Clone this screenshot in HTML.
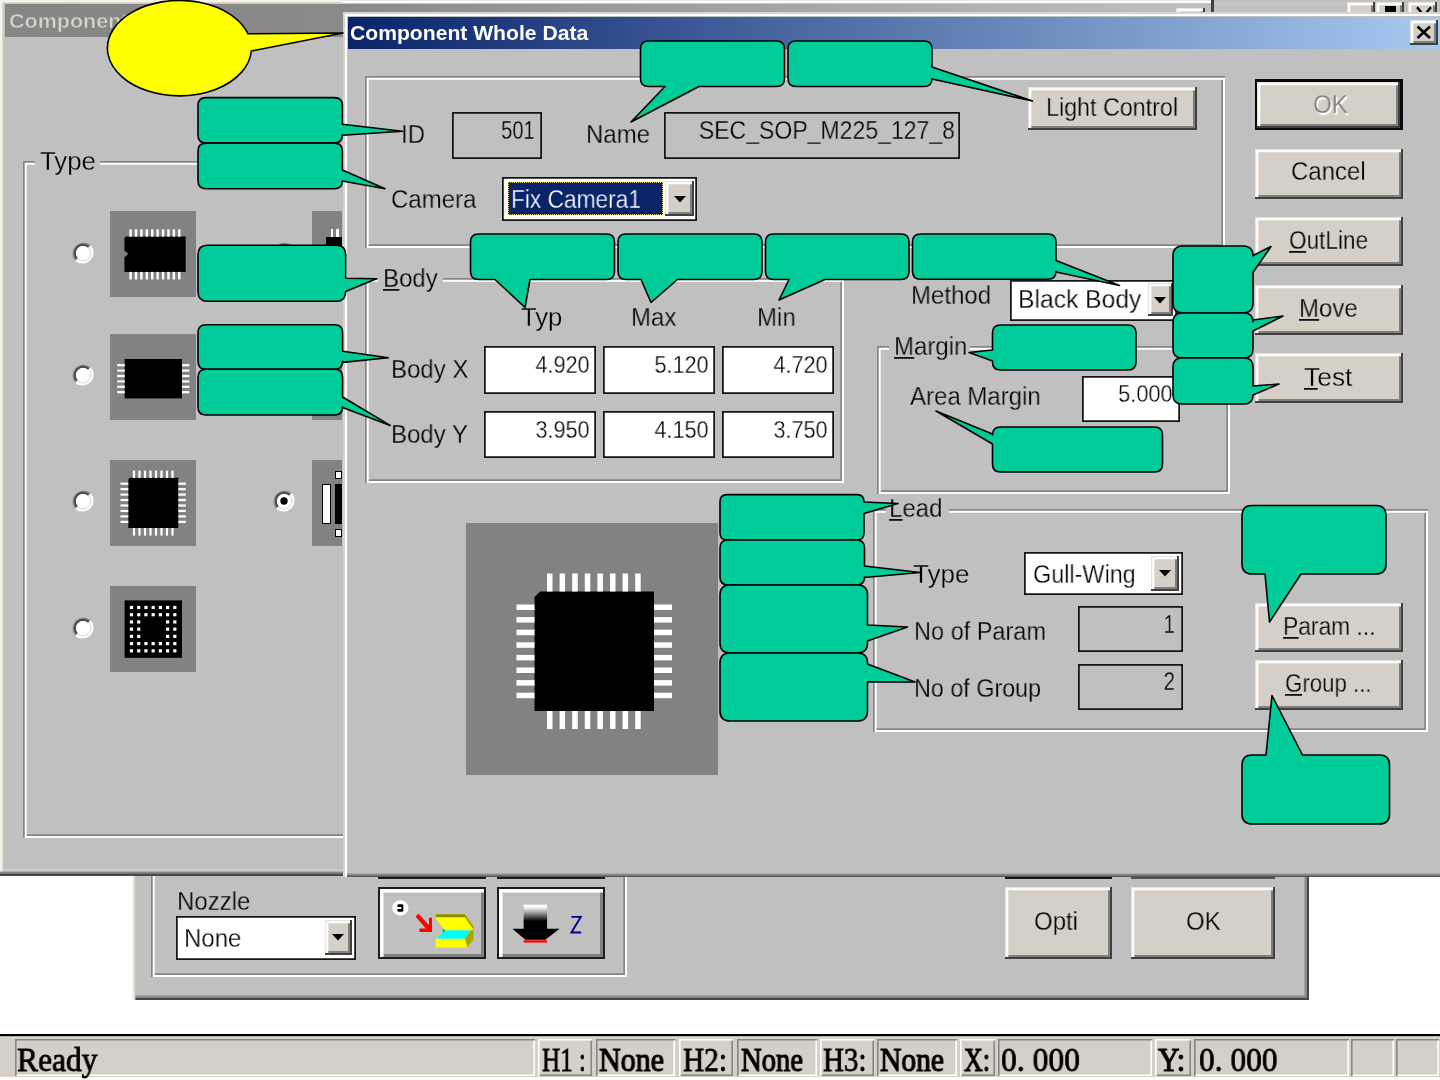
<!DOCTYPE html>
<html><head><meta charset="utf-8"><title>Component Whole Data</title>
<style>
*{box-sizing:border-box;margin:0;padding:0}
html,body{width:1440px;height:1080px;overflow:hidden;background:#fff}
body{font-family:"Liberation Sans",sans-serif;font-size:24px;color:#000;position:relative}
.a{position:absolute}
.t{white-space:nowrap;will-change:transform}
.t u{text-decoration:none;background:linear-gradient(#111,#111) no-repeat 0 24.5px/100% 1.8px}
.gb{box-shadow:inset 1.7px 1.7px 0 #858585,inset -2px -2px 0 #fff,inset 3.7px 3.7px 0 #fff,inset -3.7px -3.7px 0 #858585}
.btn{background:#d4d0c8;box-shadow:inset -2px -2px 0 #404040,inset 1.3px 1.3px 0 #e6e4de,inset 3.3px 3.3px 0 #fff,inset -4px -4px 0 #808080}
.flat{box-shadow:inset 0 0 0 1.75px #151515}
.inp{box-shadow:inset 0 0 0 1.75px #151515;background:#fff}
.sunk{background:#fff;box-shadow:inset 2px 2px 0 #808080,inset -2px -2px 0 #fff,inset 4px 4px 0 #404040,inset -4px -4px 0 #d4d0c8}
.lab{background:#c0c0c0}
.serif{font-family:"Liberation Serif",serif;font-weight:bold}
.pane{box-shadow:inset 1.6px 1.6px 0 #868686,inset -1.6px -1.6px 0 #fff}
.paner{box-shadow:inset 1.6px 1.6px 0 #fff,inset -1.6px -1.6px 0 #868686}
</style></head>
<body>
<div class="a " style="left:131.5px;top:860px;width:1177.5px;height:139.5px;background:#c0c0c0;box-shadow:inset 2px 0 0 #f4f2ea,inset 3.4px 0 0 #d8d4cc,inset -2px -2px 0 #484848,inset -4.5px -4.5px 0 #8a8a8a"></div>
<div class="a gb" style="left:150.8px;top:860px;width:476.2px;height:116.7px;"></div>
<div class="a t " style="top:888.94px;font-size:25px;line-height:25px;left:177px;transform:scaleX(0.96);transform-origin:left center;-webkit-text-stroke:0.3px #c0c0c0;">Nozzle</div>
<div class="a " style="left:378px;top:876px;width:107.5px;height:3.4px;background:#1c1c1c"></div>
<div class="a " style="left:497px;top:876px;width:107.5px;height:3.4px;background:#1c1c1c"></div>
<div class="a " style="left:1005px;top:876px;width:107px;height:3.4px;background:#141414"></div>
<div class="a " style="left:1131px;top:876px;width:143.5px;height:3.4px;background:#505050"></div>
<div class="a inp" style="left:175.5px;top:915.5px;width:180.5px;height:44.0px;"></div>
<div class="a t " style="top:925.94px;font-size:25px;line-height:25px;left:184px;transform:scaleX(0.96);transform-origin:left center;-webkit-text-stroke:0.3px #fff;">None</div>
<div class="a btn" style="left:324.5px;top:920px;width:27.5px;height:34.5px;"></div>
<svg class="a" style="left:332px;top:934px" width="12" height="7"><path d="M0 0h12L6 6.5z" fill="#000"/></svg>
<div class="a " style="left:378px;top:887px;width:107.5px;height:71.8px;background:#c0c0c0;border:2px solid #1c1c1c;box-shadow:inset 3.5px 3.5px 0 #fff,inset -3px -3px 0 #808080"></div>
<div class="a " style="left:497px;top:887px;width:107.5px;height:71.8px;background:#c0c0c0;border:2px solid #1c1c1c;box-shadow:inset 3.5px 3.5px 0 #fff,inset -3px -3px 0 #808080"></div>
<div class="a btn" style="left:1004.6px;top:887.2px;width:107.4px;height:71.6px;"></div>
<div class="a t " style="top:909.44px;font-size:25px;line-height:25px;left:1034px;transform:scaleX(0.96);transform-origin:left center;-webkit-text-stroke:0.3px #d4d0c8;">Opti</div>
<div class="a btn" style="left:1130.6px;top:887.2px;width:144.0px;height:71.6px;"></div>
<div class="a t " style="top:909.44px;font-size:25px;line-height:25px;left:1186px;transform:scaleX(0.96);transform-origin:left center;-webkit-text-stroke:0.3px #d4d0c8;">OK</div>
<div class="a " style="left:0px;top:0px;width:1440px;height:875.8px;background:#c0c0c0;box-shadow:inset 0 -2.2px 0 #484848,inset 0 -4.5px 0 #868686,inset 2.3px 2.3px 0 #f4f2ea,inset 3.5px 3.5px 0 #d4d0c8,inset 0 -6.5px 0 #d4d0c8"></div>
<div class="a " style="left:5px;top:4px;width:1206px;height:32.5px;background:linear-gradient(90deg,#868686 0,#8a8a8a 340px,#c0c0c0 1206px)"></div>
<div class="a " style="left:343px;top:0px;width:868px;height:2.6px;background:linear-gradient(#e6e6e6 0,#e6e6e6 40%,#fff 45%)"></div>
<div class="a " style="left:343px;top:2.6px;width:868px;height:1.8px;background:#c4c4c4"></div>
<div class="a t " style="top:10.97px;font-size:20px;line-height:20px;left:8.7px;transform:scaleX(1.075);transform-origin:left center;-webkit-text-stroke:0.5px #8a8a8a;font-weight:bold;color:#d8d4cc">Component</div>
<div class="a " style="left:1213.5px;top:0px;width:226.5px;height:3px;background:#c0c0c0"></div>
<div class="a " style="left:1211px;top:0px;width:2.5px;height:12px;background:#404040"></div>
<div class="a btn" style="left:1175.8px;top:7.5px;width:29.2px;height:14.5px;"></div>
<div class="a btn" style="left:1346.7px;top:2px;width:28.3px;height:28px;"></div>
<div class="a btn" style="left:1376px;top:2px;width:28.2px;height:28px;"></div>
<div class="a btn" style="left:1408px;top:2px;width:28.7px;height:28px;"></div>
<div class="a " style="left:1384.8px;top:5.7px;width:11.0px;height:6.8px;background:#000"></div>
<svg class="a" style="left:1410px;top:0" width="26" height="13"><path d="M7 7.2L11.5 12.5M21 7.2L16.5 12.5" stroke="#000" stroke-width="2.4" fill="none"/></svg>
<div class="a gb" style="left:22.8px;top:160.7px;width:397.2px;height:677.3px;"></div>
<div class="a lab" style="left:35.4px;top:150px;width:65.0px;height:26px;"></div>
<div class="a t " style="top:149.14px;font-size:25px;line-height:25px;left:39.5px;transform:scaleX(1.032);transform-origin:left center;-webkit-text-stroke:0.3px #c0c0c0;">Type</div>
<svg class="a" style="left:70.5px;top:240.5px" width="24" height="24"><circle cx="12" cy="12" r="8.2" fill="#fff"/><path d="M5.3 18.7A9.5 9.5 0 0 1 18.7 5.3" fill="none" stroke="#8a8a8a" stroke-width="3.2"/><path d="M6.2 17.8A8.2 8.2 0 0 1 17.8 6.2" fill="none" stroke="#484848" stroke-width="1.9"/><path d="M18.7 5.3A9.5 9.5 0 0 1 5.3 18.7" fill="none" stroke="#fff" stroke-width="3.2"/><path d="M17.6 6.4A7.9 7.9 0 0 1 6.4 17.6" fill="none" stroke="#e2ded6" stroke-width="1.2"/></svg>
<svg class="a" style="left:70.5px;top:363px" width="24" height="24"><circle cx="12" cy="12" r="8.2" fill="#fff"/><path d="M5.3 18.7A9.5 9.5 0 0 1 18.7 5.3" fill="none" stroke="#8a8a8a" stroke-width="3.2"/><path d="M6.2 17.8A8.2 8.2 0 0 1 17.8 6.2" fill="none" stroke="#484848" stroke-width="1.9"/><path d="M18.7 5.3A9.5 9.5 0 0 1 5.3 18.7" fill="none" stroke="#fff" stroke-width="3.2"/><path d="M17.6 6.4A7.9 7.9 0 0 1 6.4 17.6" fill="none" stroke="#e2ded6" stroke-width="1.2"/></svg>
<svg class="a" style="left:70.5px;top:489px" width="24" height="24"><circle cx="12" cy="12" r="8.2" fill="#fff"/><path d="M5.3 18.7A9.5 9.5 0 0 1 18.7 5.3" fill="none" stroke="#8a8a8a" stroke-width="3.2"/><path d="M6.2 17.8A8.2 8.2 0 0 1 17.8 6.2" fill="none" stroke="#484848" stroke-width="1.9"/><path d="M18.7 5.3A9.5 9.5 0 0 1 5.3 18.7" fill="none" stroke="#fff" stroke-width="3.2"/><path d="M17.6 6.4A7.9 7.9 0 0 1 6.4 17.6" fill="none" stroke="#e2ded6" stroke-width="1.2"/></svg>
<svg class="a" style="left:70.5px;top:615.5px" width="24" height="24"><circle cx="12" cy="12" r="8.2" fill="#fff"/><path d="M5.3 18.7A9.5 9.5 0 0 1 18.7 5.3" fill="none" stroke="#8a8a8a" stroke-width="3.2"/><path d="M6.2 17.8A8.2 8.2 0 0 1 17.8 6.2" fill="none" stroke="#484848" stroke-width="1.9"/><path d="M18.7 5.3A9.5 9.5 0 0 1 5.3 18.7" fill="none" stroke="#fff" stroke-width="3.2"/><path d="M17.6 6.4A7.9 7.9 0 0 1 6.4 17.6" fill="none" stroke="#e2ded6" stroke-width="1.2"/></svg>
<svg class="a" style="left:272.2px;top:240.5px" width="24" height="24"><circle cx="12" cy="12" r="8.2" fill="#fff"/><path d="M5.3 18.7A9.5 9.5 0 0 1 18.7 5.3" fill="none" stroke="#8a8a8a" stroke-width="3.2"/><path d="M6.2 17.8A8.2 8.2 0 0 1 17.8 6.2" fill="none" stroke="#484848" stroke-width="1.9"/><path d="M18.7 5.3A9.5 9.5 0 0 1 5.3 18.7" fill="none" stroke="#fff" stroke-width="3.2"/><path d="M17.6 6.4A7.9 7.9 0 0 1 6.4 17.6" fill="none" stroke="#e2ded6" stroke-width="1.2"/></svg>
<svg class="a" style="left:272.2px;top:363px" width="24" height="24"><circle cx="12" cy="12" r="8.2" fill="#fff"/><path d="M5.3 18.7A9.5 9.5 0 0 1 18.7 5.3" fill="none" stroke="#8a8a8a" stroke-width="3.2"/><path d="M6.2 17.8A8.2 8.2 0 0 1 17.8 6.2" fill="none" stroke="#484848" stroke-width="1.9"/><path d="M18.7 5.3A9.5 9.5 0 0 1 5.3 18.7" fill="none" stroke="#fff" stroke-width="3.2"/><path d="M17.6 6.4A7.9 7.9 0 0 1 6.4 17.6" fill="none" stroke="#e2ded6" stroke-width="1.2"/></svg>
<svg class="a" style="left:272.2px;top:489px" width="24" height="24"><circle cx="12" cy="12" r="8.2" fill="#fff"/><path d="M5.3 18.7A9.5 9.5 0 0 1 18.7 5.3" fill="none" stroke="#8a8a8a" stroke-width="3.2"/><path d="M6.2 17.8A8.2 8.2 0 0 1 17.8 6.2" fill="none" stroke="#484848" stroke-width="1.9"/><path d="M18.7 5.3A9.5 9.5 0 0 1 5.3 18.7" fill="none" stroke="#fff" stroke-width="3.2"/><path d="M17.6 6.4A7.9 7.9 0 0 1 6.4 17.6" fill="none" stroke="#e2ded6" stroke-width="1.2"/><circle cx="12" cy="12" r="3.7" fill="#000"/></svg>
<svg class="a" style="left:109.5px;top:211px" width="86.5" height="86.2" viewBox="0 0 86.5 86.2">
<rect width="86.5" height="86.2" fill="#828282"/>
<path d="M16 25.5H75.7V60.9H14.4V46.3L18.5 42.9L14.4 39.4V27Z" fill="#000"/>
<rect x="19.40" y="18.3" width="2.4" height="7.4" fill="#fff"/><rect x="19.40" y="60.9" width="2.4" height="7.6" fill="#fff"/>
<rect x="24.81" y="18.3" width="2.4" height="7.4" fill="#fff"/><rect x="24.81" y="60.9" width="2.4" height="7.6" fill="#fff"/>
<rect x="30.22" y="18.3" width="2.4" height="7.4" fill="#fff"/><rect x="30.22" y="60.9" width="2.4" height="7.6" fill="#fff"/>
<rect x="35.63" y="18.3" width="2.4" height="7.4" fill="#fff"/><rect x="35.63" y="60.9" width="2.4" height="7.6" fill="#fff"/>
<rect x="41.04" y="18.3" width="2.4" height="7.4" fill="#fff"/><rect x="41.04" y="60.9" width="2.4" height="7.6" fill="#fff"/>
<rect x="46.45" y="18.3" width="2.4" height="7.4" fill="#fff"/><rect x="46.45" y="60.9" width="2.4" height="7.6" fill="#fff"/>
<rect x="51.86" y="18.3" width="2.4" height="7.4" fill="#fff"/><rect x="51.86" y="60.9" width="2.4" height="7.6" fill="#fff"/>
<rect x="57.27" y="18.3" width="2.4" height="7.4" fill="#fff"/><rect x="57.27" y="60.9" width="2.4" height="7.6" fill="#fff"/>
<rect x="62.68" y="18.3" width="2.4" height="7.4" fill="#fff"/><rect x="62.68" y="60.9" width="2.4" height="7.6" fill="#fff"/>
<rect x="68.09" y="18.3" width="2.4" height="7.4" fill="#fff"/><rect x="68.09" y="60.9" width="2.4" height="7.6" fill="#fff"/>
</svg>
<svg class="a" style="left:109.5px;top:334px" width="86.5" height="86" viewBox="0 0 86.5 86">
<rect width="86.5" height="86" fill="#828282"/>
<rect x="14.6" y="25" width="57.4" height="39.4" fill="#000"/>
<rect x="7.2" y="30.10" width="7.6" height="2.2" fill="#fff"/><rect x="72" y="30.10" width="7.4" height="2.2" fill="#fff"/>
<rect x="7.2" y="35.50" width="7.6" height="2.2" fill="#fff"/><rect x="72" y="35.50" width="7.4" height="2.2" fill="#fff"/>
<rect x="7.2" y="40.90" width="7.6" height="2.2" fill="#fff"/><rect x="72" y="40.90" width="7.4" height="2.2" fill="#fff"/>
<rect x="7.2" y="46.30" width="7.6" height="2.2" fill="#fff"/><rect x="72" y="46.30" width="7.4" height="2.2" fill="#fff"/>
<rect x="7.2" y="51.70" width="7.6" height="2.2" fill="#fff"/><rect x="72" y="51.70" width="7.4" height="2.2" fill="#fff"/>
<rect x="7.2" y="57.10" width="7.6" height="2.2" fill="#fff"/><rect x="72" y="57.10" width="7.4" height="2.2" fill="#fff"/>
</svg>
<svg class="a" style="left:109.5px;top:460px" width="86.5" height="86" viewBox="0 0 86.5 86">
<rect width="86.5" height="86" fill="#828282"/>
<path d="M20 17.8H68.3V68H18.3V19.5Z" fill="#000"/>
<rect x="22.90" y="10.6" width="2.2" height="7.4" fill="#fff"/><rect x="22.90" y="68" width="2.2" height="7.6" fill="#fff"/>
<rect x="10.5" y="22.60" width="7.8" height="2.2" fill="#fff"/><rect x="68.3" y="22.60" width="7.5" height="2.2" fill="#fff"/>
<rect x="28.40" y="10.6" width="2.2" height="7.4" fill="#fff"/><rect x="28.40" y="68" width="2.2" height="7.6" fill="#fff"/>
<rect x="10.5" y="28.05" width="7.8" height="2.2" fill="#fff"/><rect x="68.3" y="28.05" width="7.5" height="2.2" fill="#fff"/>
<rect x="33.90" y="10.6" width="2.2" height="7.4" fill="#fff"/><rect x="33.90" y="68" width="2.2" height="7.6" fill="#fff"/>
<rect x="10.5" y="33.50" width="7.8" height="2.2" fill="#fff"/><rect x="68.3" y="33.50" width="7.5" height="2.2" fill="#fff"/>
<rect x="39.40" y="10.6" width="2.2" height="7.4" fill="#fff"/><rect x="39.40" y="68" width="2.2" height="7.6" fill="#fff"/>
<rect x="10.5" y="38.95" width="7.8" height="2.2" fill="#fff"/><rect x="68.3" y="38.95" width="7.5" height="2.2" fill="#fff"/>
<rect x="44.90" y="10.6" width="2.2" height="7.4" fill="#fff"/><rect x="44.90" y="68" width="2.2" height="7.6" fill="#fff"/>
<rect x="10.5" y="44.40" width="7.8" height="2.2" fill="#fff"/><rect x="68.3" y="44.40" width="7.5" height="2.2" fill="#fff"/>
<rect x="50.40" y="10.6" width="2.2" height="7.4" fill="#fff"/><rect x="50.40" y="68" width="2.2" height="7.6" fill="#fff"/>
<rect x="10.5" y="49.85" width="7.8" height="2.2" fill="#fff"/><rect x="68.3" y="49.85" width="7.5" height="2.2" fill="#fff"/>
<rect x="55.90" y="10.6" width="2.2" height="7.4" fill="#fff"/><rect x="55.90" y="68" width="2.2" height="7.6" fill="#fff"/>
<rect x="10.5" y="55.30" width="7.8" height="2.2" fill="#fff"/><rect x="68.3" y="55.30" width="7.5" height="2.2" fill="#fff"/>
<rect x="61.40" y="10.6" width="2.2" height="7.4" fill="#fff"/><rect x="61.40" y="68" width="2.2" height="7.6" fill="#fff"/>
<rect x="10.5" y="60.75" width="7.8" height="2.2" fill="#fff"/><rect x="68.3" y="60.75" width="7.5" height="2.2" fill="#fff"/>
</svg>
<svg class="a" style="left:109.5px;top:586px" width="86.5" height="86" viewBox="0 0 86.5 86">
<rect width="86.5" height="86" fill="#828282"/>
<rect x="14.6" y="14.4" width="57.4" height="57.4" fill="#000"/>
<rect x="19.90" y="19.90" width="3.2" height="3.2" fill="#fff"/>
<rect x="27.12" y="19.90" width="3.2" height="3.2" fill="#fff"/>
<rect x="34.34" y="19.90" width="3.2" height="3.2" fill="#fff"/>
<rect x="41.56" y="19.90" width="3.2" height="3.2" fill="#fff"/>
<rect x="48.78" y="19.90" width="3.2" height="3.2" fill="#fff"/>
<rect x="56.00" y="19.90" width="3.2" height="3.2" fill="#fff"/>
<rect x="63.22" y="19.90" width="3.2" height="3.2" fill="#fff"/>
<rect x="19.90" y="27.12" width="3.2" height="3.2" fill="#fff"/>
<rect x="27.12" y="27.12" width="3.2" height="3.2" fill="#fff"/>
<rect x="34.34" y="27.12" width="3.2" height="3.2" fill="#fff"/>
<rect x="41.56" y="27.12" width="3.2" height="3.2" fill="#fff"/>
<rect x="48.78" y="27.12" width="3.2" height="3.2" fill="#fff"/>
<rect x="56.00" y="27.12" width="3.2" height="3.2" fill="#fff"/>
<rect x="63.22" y="27.12" width="3.2" height="3.2" fill="#fff"/>
<rect x="19.90" y="34.34" width="3.2" height="3.2" fill="#fff"/>
<rect x="27.12" y="34.34" width="3.2" height="3.2" fill="#fff"/>
<rect x="56.00" y="34.34" width="3.2" height="3.2" fill="#fff"/>
<rect x="63.22" y="34.34" width="3.2" height="3.2" fill="#fff"/>
<rect x="19.90" y="41.56" width="3.2" height="3.2" fill="#fff"/>
<rect x="27.12" y="41.56" width="3.2" height="3.2" fill="#fff"/>
<rect x="56.00" y="41.56" width="3.2" height="3.2" fill="#fff"/>
<rect x="63.22" y="41.56" width="3.2" height="3.2" fill="#fff"/>
<rect x="19.90" y="48.78" width="3.2" height="3.2" fill="#fff"/>
<rect x="27.12" y="48.78" width="3.2" height="3.2" fill="#fff"/>
<rect x="56.00" y="48.78" width="3.2" height="3.2" fill="#fff"/>
<rect x="63.22" y="48.78" width="3.2" height="3.2" fill="#fff"/>
<rect x="19.90" y="56.00" width="3.2" height="3.2" fill="#fff"/>
<rect x="27.12" y="56.00" width="3.2" height="3.2" fill="#fff"/>
<rect x="34.34" y="56.00" width="3.2" height="3.2" fill="#fff"/>
<rect x="41.56" y="56.00" width="3.2" height="3.2" fill="#fff"/>
<rect x="48.78" y="56.00" width="3.2" height="3.2" fill="#fff"/>
<rect x="56.00" y="56.00" width="3.2" height="3.2" fill="#fff"/>
<rect x="63.22" y="56.00" width="3.2" height="3.2" fill="#fff"/>
<rect x="19.90" y="63.22" width="3.2" height="3.2" fill="#fff"/>
<rect x="27.12" y="63.22" width="3.2" height="3.2" fill="#fff"/>
<rect x="34.34" y="63.22" width="3.2" height="3.2" fill="#fff"/>
<rect x="41.56" y="63.22" width="3.2" height="3.2" fill="#fff"/>
<rect x="48.78" y="63.22" width="3.2" height="3.2" fill="#fff"/>
<rect x="56.00" y="63.22" width="3.2" height="3.2" fill="#fff"/>
<rect x="63.22" y="63.22" width="3.2" height="3.2" fill="#fff"/>
</svg>
<div class="a " style="left:311.5px;top:211px;width:30.5px;height:86px;background:#828282"></div>
<div class="a " style="left:311.5px;top:334px;width:30.5px;height:86px;background:#828282"></div>
<div class="a " style="left:311.5px;top:460px;width:30.5px;height:86px;background:#828282"></div>
<div class="a " style="left:326px;top:236.6px;width:16px;height:35.4px;background:#000"></div>
<div class="a " style="left:331px;top:229px;width:2.4px;height:7.6px;background:#fff"></div>
<div class="a " style="left:336.4px;top:229px;width:2.4px;height:7.6px;background:#fff"></div>
<div class="a " style="left:322px;top:484px;width:9px;height:40px;background:#fff;border:1.5px solid #000"></div>
<div class="a " style="left:334.5px;top:484px;width:7.5px;height:40px;background:#000"></div>
<div class="a " style="left:334.5px;top:471px;width:7.5px;height:8px;background:#fff;border:1.5px solid #000"></div>
<div class="a " style="left:334.5px;top:529px;width:7.5px;height:8px;background:#fff;border:1.5px solid #000"></div>
<div class="a " style="left:342.5px;top:12px;width:1101.5px;height:865px;background:#c0c0c0;box-shadow:inset 2px 2px 0 #d8d4cc,inset 4px 4px 0 #fff,inset 0 -1.5px 0 #585858,inset 0 -3.5px 0 #909090"></div>
<div class="a " style="left:347.5px;top:16.5px;width:1092.5px;height:32.0px;background:linear-gradient(90deg,#0a246a 0,#a6caf0 100%)"></div>
<div class="a t " style="top:23.47px;font-size:20px;line-height:20px;left:350.4px;transform:scaleX(1.056);transform-origin:left center;font-weight:bold;color:#fff">Component Whole Data</div>
<div class="a btn" style="left:1410px;top:20px;width:28.3px;height:25px;"></div>
<svg class="a" style="left:1416px;top:25px" width="16" height="15"><path d="M1.5 1.5L14 13M14 1.5L1.5 13" stroke="#000" stroke-width="2.6" fill="none"/></svg>
<div class="a gb" style="left:365.4px;top:76.2px;width:860.1px;height:171.8px;"></div>
<div class="a t " style="top:121.94px;font-size:25px;line-height:25px;left:401px;transform:scaleX(0.96);transform-origin:left center;-webkit-text-stroke:0.3px #c0c0c0;">ID</div>
<div class="a flat" style="left:451.5px;top:112.0px;width:90.0px;height:46.5px;"></div>
<div class="a t " style="top:118.44px;font-size:25px;line-height:25px;right:905.7px;transform:scaleX(0.8064);transform-origin:right center;-webkit-text-stroke:0.3px #c0c0c0;">501</div>
<div class="a t " style="top:121.94px;font-size:25px;line-height:25px;left:586px;transform:scaleX(0.96);transform-origin:left center;-webkit-text-stroke:0.3px #c0c0c0;">Name</div>
<div class="a flat" style="left:664.0px;top:112.0px;width:296.0px;height:46.5px;"></div>
<div class="a t " style="top:118.44px;font-size:25px;line-height:25px;right:485.5px;transform:scaleX(0.9216);transform-origin:right center;-webkit-text-stroke:0.3px #c0c0c0;">SEC_SOP_M225_127_8</div>
<div class="a t " style="top:187.44px;font-size:25px;line-height:25px;left:391px;transform:scaleX(0.96);transform-origin:left center;-webkit-text-stroke:0.3px #c0c0c0;">Camera</div>
<div class="a inp" style="left:501.5px;top:176.5px;width:195.5px;height:44.0px;"></div>
<div class="a " style="left:507.5px;top:182px;width:155.0px;height:33px;background:#0a246a;outline:1.5px dotted #d8c878;outline-offset:-1.5px"></div>
<div class="a t " style="top:187.24px;font-size:25px;line-height:25px;left:510.5px;transform:scaleX(0.9082);transform-origin:left center;-webkit-text-stroke:0.3px #0a246a;color:#fff">Fix Camera1</div>
<div class="a btn" style="left:665px;top:180.5px;width:28.5px;height:35.5px;"></div>
<svg class="a" style="left:673.5px;top:195.5px" width="12" height="7"><path d="M0 0h12L6 6.5z" fill="#000"/></svg>
<div class="a btn" style="left:1028.4px;top:87.4px;width:168.6px;height:42.3px;"></div>
<div class="a t " style="top:94.94px;font-size:25px;line-height:25px;left:1046px;transform:scaleX(0.9312);transform-origin:left center;-webkit-text-stroke:0.3px #d4d0c8;">Light Control</div>
<div class="a " style="left:1254.8999999999999px;top:79.3px;width:147.7px;height:51.0px;background:#0a0a0a"></div>
<div class="a btn" style="left:1257.3px;top:81.5px;width:143.1px;height:46.5px;"></div>
<div class="a t " style="top:91.94px;font-size:25px;line-height:25px;left:1313px;transform:scaleX(0.96);transform-origin:left center;-webkit-text-stroke:0.3px #d4d0c8;color:#808080;text-shadow:1.5px 1.5px 0 #fff;">OK</div>
<div class="a btn" style="left:1255.3px;top:148.5px;width:147.3px;height:50.0px;"></div>
<div class="a t " style="top:159.44px;font-size:25px;line-height:25px;left:1291px;transform:scaleX(0.96);transform-origin:left center;-webkit-text-stroke:0.3px #d4d0c8;">Cancel</div>
<div class="a btn" style="left:1255.3px;top:216.5px;width:147.3px;height:49.5px;"></div>
<div class="a t " style="top:228.44px;font-size:25px;line-height:25px;left:1288.5px;transform:scaleX(0.9024);transform-origin:left center;-webkit-text-stroke:0.3px #d4d0c8;"><u>O</u>utLine</div>
<div class="a btn" style="left:1255.3px;top:285px;width:147.3px;height:50px;"></div>
<div class="a t " style="top:296.44px;font-size:25px;line-height:25px;left:1299px;transform:scaleX(0.96);transform-origin:left center;-webkit-text-stroke:0.3px #d4d0c8;"><u>M</u>ove</div>
<div class="a btn" style="left:1255.3px;top:353px;width:147.3px;height:50px;"></div>
<div class="a t " style="top:364.94px;font-size:25px;line-height:25px;left:1304px;transform:scaleX(1.056);transform-origin:left center;-webkit-text-stroke:0.3px #d4d0c8;"><u>T</u>est</div>
<div class="a btn" style="left:1255.3px;top:603.2px;width:147.3px;height:48.8px;"></div>
<div class="a t " style="top:614.44px;font-size:25px;line-height:25px;left:1282.5px;transform:scaleX(0.912);transform-origin:left center;-webkit-text-stroke:0.3px #d4d0c8;"><u>P</u>aram ...</div>
<div class="a btn" style="left:1255.3px;top:660px;width:147.3px;height:50px;"></div>
<div class="a t " style="top:671.44px;font-size:25px;line-height:25px;left:1284.5px;transform:scaleX(0.8899);transform-origin:left center;-webkit-text-stroke:0.3px #d4d0c8;"><u>G</u>roup ...</div>
<div class="a gb" style="left:365.4px;top:278px;width:478.8px;height:205.2px;"></div>
<div class="a lab" style="left:377.5px;top:266px;width:65.0px;height:26px;"></div>
<div class="a t " style="top:265.74px;font-size:25px;line-height:25px;left:382.5px;transform:scaleX(0.96);transform-origin:left center;-webkit-text-stroke:0.3px #c0c0c0;"><u>B</u>ody</div>
<div class="a t " style="top:305.44px;font-size:25px;line-height:25px;left:521px;transform:scaleX(1.0272);transform-origin:left center;-webkit-text-stroke:0.3px #c0c0c0;">Typ</div>
<div class="a t " style="top:305.44px;font-size:25px;line-height:25px;left:631px;transform:scaleX(0.96);transform-origin:left center;-webkit-text-stroke:0.3px #c0c0c0;">Max</div>
<div class="a t " style="top:305.44px;font-size:25px;line-height:25px;left:757px;transform:scaleX(0.96);transform-origin:left center;-webkit-text-stroke:0.3px #c0c0c0;">Min</div>
<div class="a t " style="top:356.64px;font-size:25px;line-height:25px;left:391px;transform:scaleX(0.96);transform-origin:left center;-webkit-text-stroke:0.3px #c0c0c0;">Body X</div>
<div class="a t " style="top:421.74px;font-size:25px;line-height:25px;left:391px;transform:scaleX(0.96);transform-origin:left center;-webkit-text-stroke:0.3px #c0c0c0;">Body Y</div>
<div class="a inp" style="left:483.5px;top:345.5px;width:112.5px;height:48.0px;"></div>
<div class="a t " style="top:354.43px;font-size:23px;line-height:23px;right:850.0px;transform:scaleX(0.94);transform-origin:right center;-webkit-text-stroke:0.3px #fff;">4.920</div>
<div class="a inp" style="left:602.5px;top:345.5px;width:112.5px;height:48.0px;"></div>
<div class="a t " style="top:354.43px;font-size:23px;line-height:23px;right:731.0px;transform:scaleX(0.94);transform-origin:right center;-webkit-text-stroke:0.3px #fff;">5.120</div>
<div class="a inp" style="left:721.5px;top:345.5px;width:112.0px;height:48.0px;"></div>
<div class="a t " style="top:354.43px;font-size:23px;line-height:23px;right:612.5px;transform:scaleX(0.94);transform-origin:right center;-webkit-text-stroke:0.3px #fff;">4.720</div>
<div class="a inp" style="left:483.5px;top:410.5px;width:112.5px;height:47.5px;"></div>
<div class="a t " style="top:419.43px;font-size:23px;line-height:23px;right:850.0px;transform:scaleX(0.94);transform-origin:right center;-webkit-text-stroke:0.3px #fff;">3.950</div>
<div class="a inp" style="left:602.5px;top:410.5px;width:112.5px;height:47.5px;"></div>
<div class="a t " style="top:419.43px;font-size:23px;line-height:23px;right:731.0px;transform:scaleX(0.94);transform-origin:right center;-webkit-text-stroke:0.3px #fff;">4.150</div>
<div class="a inp" style="left:721.5px;top:410.5px;width:112.0px;height:47.5px;"></div>
<div class="a t " style="top:419.43px;font-size:23px;line-height:23px;right:612.5px;transform:scaleX(0.94);transform-origin:right center;-webkit-text-stroke:0.3px #fff;">3.750</div>
<div class="a t " style="top:283.44px;font-size:25px;line-height:25px;left:910.5px;transform:scaleX(0.96);transform-origin:left center;-webkit-text-stroke:0.3px #c0c0c0;">Method</div>
<div class="a inp" style="left:1010.0px;top:279.5px;width:166.5px;height:41.0px;"></div>
<div class="a t " style="top:286.94px;font-size:25px;line-height:25px;left:1017.5px;transform:scaleX(0.9859);transform-origin:left center;-webkit-text-stroke:0.3px #fff;">Black Body</div>
<div class="a btn" style="left:1147.5px;top:283px;width:25.0px;height:33px;"></div>
<svg class="a" style="left:1154px;top:296.5px" width="12" height="7"><path d="M0 0h12L6 6.5z" fill="#000"/></svg>
<div class="a gb" style="left:876.7px;top:346.3px;width:353.3px;height:147.7px;"></div>
<div class="a lab" style="left:889px;top:336px;width:81px;height:26px;"></div>
<div class="a t " style="top:334.44px;font-size:25px;line-height:25px;left:894px;transform:scaleX(0.96);transform-origin:left center;-webkit-text-stroke:0.3px #c0c0c0;"><u>M</u>argin</div>
<div class="a t " style="top:384.44px;font-size:25px;line-height:25px;left:909.5px;transform:scaleX(0.96);transform-origin:left center;-webkit-text-stroke:0.3px #c0c0c0;">Area Margin</div>
<div class="a inp" style="left:1082.0px;top:375.5px;width:97.5px;height:46.0px;"></div>
<div class="a t " style="top:382.93px;font-size:23px;line-height:23px;right:267.5px;transform:scaleX(0.945);transform-origin:right center;-webkit-text-stroke:0.3px #fff;">5.000</div>
<svg class="a" style="left:466px;top:522.5px" width="252" height="252.5" viewBox="0 0 252 252.5">
<rect width="252" height="252.5" fill="#828282"/>
<path d="M74 68.5H188V188H68.5V74Z" fill="#000"/>
<rect x="81.00" y="50.5" width="5.5" height="18" fill="#fff"/><rect x="81.00" y="188" width="5.5" height="18" fill="#fff"/>
<rect x="50.5" y="81.50" width="18" height="5.5" fill="#fff"/><rect x="188" y="81.50" width="18" height="5.5" fill="#fff"/>
<rect x="93.60" y="50.5" width="5.5" height="18" fill="#fff"/><rect x="93.60" y="188" width="5.5" height="18" fill="#fff"/>
<rect x="50.5" y="94.10" width="18" height="5.5" fill="#fff"/><rect x="188" y="94.10" width="18" height="5.5" fill="#fff"/>
<rect x="106.20" y="50.5" width="5.5" height="18" fill="#fff"/><rect x="106.20" y="188" width="5.5" height="18" fill="#fff"/>
<rect x="50.5" y="106.70" width="18" height="5.5" fill="#fff"/><rect x="188" y="106.70" width="18" height="5.5" fill="#fff"/>
<rect x="118.80" y="50.5" width="5.5" height="18" fill="#fff"/><rect x="118.80" y="188" width="5.5" height="18" fill="#fff"/>
<rect x="50.5" y="119.30" width="18" height="5.5" fill="#fff"/><rect x="188" y="119.30" width="18" height="5.5" fill="#fff"/>
<rect x="131.40" y="50.5" width="5.5" height="18" fill="#fff"/><rect x="131.40" y="188" width="5.5" height="18" fill="#fff"/>
<rect x="50.5" y="131.90" width="18" height="5.5" fill="#fff"/><rect x="188" y="131.90" width="18" height="5.5" fill="#fff"/>
<rect x="144.00" y="50.5" width="5.5" height="18" fill="#fff"/><rect x="144.00" y="188" width="5.5" height="18" fill="#fff"/>
<rect x="50.5" y="144.50" width="18" height="5.5" fill="#fff"/><rect x="188" y="144.50" width="18" height="5.5" fill="#fff"/>
<rect x="156.60" y="50.5" width="5.5" height="18" fill="#fff"/><rect x="156.60" y="188" width="5.5" height="18" fill="#fff"/>
<rect x="50.5" y="157.10" width="18" height="5.5" fill="#fff"/><rect x="188" y="157.10" width="18" height="5.5" fill="#fff"/>
<rect x="169.20" y="50.5" width="5.5" height="18" fill="#fff"/><rect x="169.20" y="188" width="5.5" height="18" fill="#fff"/>
<rect x="50.5" y="169.70" width="18" height="5.5" fill="#fff"/><rect x="188" y="169.70" width="18" height="5.5" fill="#fff"/>
</svg>
<div class="a gb" style="left:873.3px;top:509.2px;width:554.7px;height:222.8px;"></div>
<div class="a lab" style="left:886px;top:498px;width:63px;height:26px;"></div>
<div class="a t " style="top:496.44px;font-size:25px;line-height:25px;left:889.3px;transform:scaleX(0.96);transform-origin:left center;-webkit-text-stroke:0.3px #c0c0c0;"><u>L</u>ead</div>
<div class="a t " style="top:561.64px;font-size:25px;line-height:25px;left:912.5px;transform:scaleX(1.0416);transform-origin:left center;-webkit-text-stroke:0.3px #c0c0c0;">Type</div>
<div class="a inp" style="left:1024.0px;top:551.5px;width:159.0px;height:43.5px;"></div>
<div class="a t " style="top:562.04px;font-size:25px;line-height:25px;left:1032.5px;transform:scaleX(0.936);transform-origin:left center;-webkit-text-stroke:0.3px #fff;">Gull-Wing</div>
<div class="a btn" style="left:1151px;top:555.6px;width:28px;height:35.4px;"></div>
<svg class="a" style="left:1159px;top:570px" width="12" height="7"><path d="M0 0h12L6 6.5z" fill="#000"/></svg>
<div class="a t " style="top:618.94px;font-size:25px;line-height:25px;left:914px;transform:scaleX(0.9408);transform-origin:left center;-webkit-text-stroke:0.3px #c0c0c0;">No of Param</div>
<div class="a flat" style="left:1077.5px;top:605.5px;width:105.5px;height:46.0px;"></div>
<div class="a t " style="top:611.94px;font-size:25px;line-height:25px;right:265px;transform:scaleX(0.816);transform-origin:right center;-webkit-text-stroke:0.3px #c0c0c0;">1</div>
<div class="a t " style="top:676.44px;font-size:25px;line-height:25px;left:914px;transform:scaleX(0.9331);transform-origin:left center;-webkit-text-stroke:0.3px #c0c0c0;">No of Group</div>
<div class="a flat" style="left:1077.5px;top:663.5px;width:105.5px;height:46.5px;"></div>
<div class="a t " style="top:668.94px;font-size:25px;line-height:25px;right:265px;transform:scaleX(0.816);transform-origin:right center;-webkit-text-stroke:0.3px #c0c0c0;">2</div>
<div class="a " style="left:0px;top:1034px;width:1440px;height:42.8px;background:#d4d0c8;box-shadow:inset 0 2.2px 0 #000,inset 0 3.6px 0 #ece9e2"></div>
<div class="a pane" style="left:14.5px;top:1038.5px;width:520.5px;height:37.2px;"></div>
<div class="a paner" style="left:538px;top:1038.5px;width:54px;height:37.2px;"></div>
<div class="a pane" style="left:595.7px;top:1038.5px;width:79.8px;height:37.2px;"></div>
<div class="a paner" style="left:678.7px;top:1038.5px;width:54.3px;height:37.2px;"></div>
<div class="a pane" style="left:736.5px;top:1038.5px;width:80.0px;height:37.2px;"></div>
<div class="a paner" style="left:819.5px;top:1038.5px;width:54.5px;height:37.2px;"></div>
<div class="a pane" style="left:877px;top:1038.5px;width:80px;height:37.2px;"></div>
<div class="a paner" style="left:960px;top:1038.5px;width:34.5px;height:37.2px;"></div>
<div class="a pane" style="left:997.5px;top:1038.5px;width:154.5px;height:37.2px;"></div>
<div class="a paner" style="left:1154.5px;top:1038.5px;width:36.5px;height:37.2px;"></div>
<div class="a pane" style="left:1194px;top:1038.5px;width:154.5px;height:37.2px;"></div>
<div class="a pane" style="left:1351px;top:1038.5px;width:42.5px;height:37.2px;"></div>
<div class="a pane" style="left:1396px;top:1038.5px;width:43px;height:37.2px;"></div>
<div class="a t serif" style="left:17px;top:1043.02px;font-size:34px;line-height:34px;font-weight:normal;-webkit-text-stroke:0.8px #000;transform:scaleX(0.927);transform-origin:left center">Ready</div>
<div class="a t serif" style="left:542px;top:1043.02px;font-size:34px;line-height:34px;font-weight:normal;-webkit-text-stroke:0.8px #000;transform:scaleX(0.739);transform-origin:left center">H1&nbsp;:</div>
<div class="a t serif" style="left:599px;top:1043.02px;font-size:34px;line-height:34px;font-weight:normal;-webkit-text-stroke:1.2px #000;transform:scaleX(0.883);transform-origin:left center">None</div>
<div class="a t serif" style="left:683px;top:1043.02px;font-size:34px;line-height:34px;font-weight:normal;-webkit-text-stroke:0.8px #000;transform:scaleX(0.863);transform-origin:left center">H2:</div>
<div class="a t serif" style="left:741px;top:1043.02px;font-size:34px;line-height:34px;font-weight:normal;-webkit-text-stroke:1.2px #000;transform:scaleX(0.842);transform-origin:left center">None</div>
<div class="a t serif" style="left:822.5px;top:1043.02px;font-size:34px;line-height:34px;font-weight:normal;-webkit-text-stroke:0.8px #000;transform:scaleX(0.853);transform-origin:left center">H3:</div>
<div class="a t serif" style="left:880px;top:1043.02px;font-size:34px;line-height:34px;font-weight:normal;-webkit-text-stroke:1.2px #000;transform:scaleX(0.869);transform-origin:left center">None</div>
<div class="a t serif" style="left:964px;top:1043.02px;font-size:34px;line-height:34px;font-weight:normal;-webkit-text-stroke:1.2px #000;transform:scaleX(0.765);transform-origin:left center">X:</div>
<div class="a t serif" style="left:1001px;top:1043.02px;font-size:34px;line-height:34px;font-weight:normal;-webkit-text-stroke:0.8px #000;transform:scaleX(0.929);transform-origin:left center">0.&nbsp;000</div>
<div class="a t serif" style="left:1158px;top:1043.02px;font-size:34px;line-height:34px;font-weight:normal;-webkit-text-stroke:1.2px #000;transform:scaleX(0.874);transform-origin:left center">Y:</div>
<div class="a t serif" style="left:1199px;top:1043.02px;font-size:34px;line-height:34px;font-weight:normal;-webkit-text-stroke:0.8px #000;transform:scaleX(0.924);transform-origin:left center">0.&nbsp;000</div>
<svg class="a" style="left:370px;top:870px" width="250" height="100" viewBox="0 0 1440 576"><defs><linearGradient id="zg" x1="0" y1="0" x2="0" y2="1"><stop offset="0" stop-color="#fff"/><stop offset="0.12" stop-color="#fff"/><stop offset="0.5" stop-color="#909090"/><stop offset="0.95" stop-color="#000"/></linearGradient></defs><ellipse cx="175" cy="218" rx="47" ry="44" fill="#fff"/><rect x="158" y="197" width="34" height="44" rx="8" fill="#000"/><rect x="156" y="213" width="24" height="11" fill="#fff"/><path d="M262 268L280 252L340 318L340 275L357 275L357 357L285 357L285 337L322 337Z" fill="#f00"/><path d="M378 255L545 255L597 322L597 400L560 447L378 447L378 400L430 347L378 280Z" fill="#ff0"/><path d="M378 255L545 255L560 272L378 272Z" fill="#8a8a00"/><path d="M428 347L580 347L548 396L384 396Z" fill="#0ff"/><path d="M545 255L597 322L597 345L578 318L548 275Z" fill="#a0a000"/><path d="M580 347L597 345L597 400L560 447L548 396Z" fill="#a8a800"/><path d="M418 340L432 347L422 362Z" fill="#00a000"/><rect x="885" y="200" width="135" height="100" fill="url(#zg)"/><path d="M885 292L1020 292L1020 338L1092 338L1010 402L895 402L820 338L885 338Z" fill="#000"/><rect x="885" y="405" width="135" height="13" fill="#f00"/><path d="M1160 270H1214L1160 360H1216" fill="none" stroke="#00008b" stroke-width="11" stroke-linejoin="miter"/></svg>
<svg class="a" style="left:0;top:0" width="1440" height="1080" viewBox="0 0 1440 1080">
<path d="M248.1 33.8A72 47.7 0 1 0 251.3 51.0L343 33Z" fill="#ffff00" stroke="#000" stroke-width="1.6" stroke-linejoin="round"/>
<path d="M206 97.6L334.4 97.6Q342.4 97.6 342.4 105.6L342.4 124.2L402.5 131.3L342.4 135.2L342.4 135.1Q342.4 143.1 334.4 143.1L206 143.1Q198 143.1 198 135.1L198 105.6Q198 97.6 206 97.6Z" fill="#00cc99" stroke="#000" stroke-width="1.6" stroke-linejoin="round"/>
<path d="M206 143.1L334.4 143.1Q342.4 143.1 342.4 151.1L342.4 170L385 188.8L342.4 181L342.4 180.8Q342.4 188.8 334.4 188.8L206 188.8Q198 188.8 198 180.8L198 151.1Q198 143.1 206 143.1Z" fill="#00cc99" stroke="#000" stroke-width="1.6" stroke-linejoin="round"/>
<path d="M207.5 245.2L336.2 245.2Q345.7 245.2 345.7 254.7L345.7 278.3L376.5 278.7L345.7 291.5L345.7 291.8Q345.7 301.3 336.2 301.3L207.5 301.3Q198 301.3 198 291.8L198 254.7Q198 245.2 207.5 245.2Z" fill="#00cc99" stroke="#000" stroke-width="1.6" stroke-linejoin="round"/>
<path d="M206 324.8L334.6 324.8Q342.6 324.8 342.6 332.8L342.6 351.3L388.3 357.8L342.6 362.4L342.6 361.3Q342.6 369.3 334.6 369.3L206 369.3Q198 369.3 198 361.3L198 332.8Q198 324.8 206 324.8Z" fill="#00cc99" stroke="#000" stroke-width="1.6" stroke-linejoin="round"/>
<path d="M206 369.3L334.6 369.3Q342.6 369.3 342.6 377.3L342.6 397L390.2 425.4L342.6 407.6L342.6 407Q342.6 415 334.6 415L206 415Q198 415 198 407L198 377.3Q198 369.3 206 369.3Z" fill="#00cc99" stroke="#000" stroke-width="1.6" stroke-linejoin="round"/>
<path d="M648.5 41L776.5 41Q784.5 41 784.5 49L784.5 78.5Q784.5 86.5 776.5 86.5L699 86.5L631 122L665 86.5L648.5 86.5Q640.5 86.5 640.5 78.5L640.5 49Q640.5 41 648.5 41Z" fill="#00cc99" stroke="#000" stroke-width="1.6" stroke-linejoin="round"/>
<path d="M796 41L924 41Q932 41 932 49L932 67L1032.5 101L932 79L932 78.5Q932 86.5 924 86.5L796 86.5Q788 86.5 788 78.5L788 49Q788 41 796 41Z" fill="#00cc99" stroke="#000" stroke-width="1.6" stroke-linejoin="round"/>
<path d="M478.5 234L606.5 234Q614.5 234 614.5 242L614.5 271.5Q614.5 279.5 606.5 279.5L530 279.5L525 307.5L495 279.5L478.5 279.5Q470.5 279.5 470.5 271.5L470.5 242Q470.5 234 478.5 234Z" fill="#00cc99" stroke="#000" stroke-width="1.6" stroke-linejoin="round"/>
<path d="M626 234L754 234Q762 234 762 242L762 271.5Q762 279.5 754 279.5L677.5 279.5L651 302.5L641 279.5L626 279.5Q618 279.5 618 271.5L618 242Q618 234 626 234Z" fill="#00cc99" stroke="#000" stroke-width="1.6" stroke-linejoin="round"/>
<path d="M773.5 234L901 234Q909 234 909 242L909 271.5Q909 279.5 901 279.5L825 279.5L779 300L789 279.5L773.5 279.5Q765.5 279.5 765.5 271.5L765.5 242Q765.5 234 773.5 234Z" fill="#00cc99" stroke="#000" stroke-width="1.6" stroke-linejoin="round"/>
<path d="M920.5 234L1048 234Q1056 234 1056 242L1056 260.5L1119.5 285.5L1056 272L1056 271.3Q1056 279.3 1048 279.3L920.5 279.3Q912.5 279.3 912.5 271.3L912.5 242Q912.5 234 920.5 234Z" fill="#00cc99" stroke="#000" stroke-width="1.6" stroke-linejoin="round"/>
<path d="M1183 246L1243 246Q1253 246 1253 256L1253 255.5L1271 246.5L1253 272.5L1253 303Q1253 313 1243 313L1183 313Q1173 313 1173 303L1173 256Q1173 246 1183 246Z" fill="#00cc99" stroke="#000" stroke-width="1.6" stroke-linejoin="round"/>
<path d="M1182 313L1244 313Q1253 313 1253 322L1253 320L1283 316L1253 331L1253 349Q1253 358 1244 358L1182 358Q1173 358 1173 349L1173 322Q1173 313 1182 313Z" fill="#00cc99" stroke="#000" stroke-width="1.6" stroke-linejoin="round"/>
<path d="M1182 358L1244 358Q1253 358 1253 367L1253 386L1279 384L1253 395L1253 395Q1253 404 1244 404L1182 404Q1173 404 1173 395L1173 367Q1173 358 1182 358Z" fill="#00cc99" stroke="#000" stroke-width="1.6" stroke-linejoin="round"/>
<path d="M1000.5 325L1128 325Q1136 325 1136 333L1136 362Q1136 370 1128 370L1000.5 370Q992.5 370 992.5 362L992.5 361L969 352.5L992.5 350L992.5 333Q992.5 325 1000.5 325Z" fill="#00cc99" stroke="#000" stroke-width="1.6" stroke-linejoin="round"/>
<path d="M1000.5 427L1154.5 427Q1162.5 427 1162.5 435L1162.5 464Q1162.5 472 1154.5 472L1000.5 472Q992.5 472 992.5 464L992.5 444L936 411L992.5 434L992.5 435Q992.5 427 1000.5 427Z" fill="#00cc99" stroke="#000" stroke-width="1.6" stroke-linejoin="round"/>
<path d="M727 494.6L857 494.6Q864 494.6 864 501.6L864 502L898 503.5L864 513.5L864 533Q864 540 857 540L727 540Q720 540 720 533L720 501.6Q720 494.6 727 494.6Z" fill="#00cc99" stroke="#000" stroke-width="1.6" stroke-linejoin="round"/>
<path d="M728 540L856.5 540Q864.5 540 864.5 548L864.5 566L920 572.5L864.5 577.5L864.5 577Q864.5 585 856.5 585L728 585Q720 585 720 577L720 548Q720 540 728 540Z" fill="#00cc99" stroke="#000" stroke-width="1.6" stroke-linejoin="round"/>
<path d="M730 585L857.5 585Q867.5 585 867.5 595L867.5 625L907.5 627L867.5 641L867.5 643Q867.5 653 857.5 653L730 653Q720 653 720 643L720 595Q720 585 730 585Z" fill="#00cc99" stroke="#000" stroke-width="1.6" stroke-linejoin="round"/>
<path d="M730 653L857.5 653Q867.5 653 867.5 663L867.5 664L915 682L867.5 682L867.5 711Q867.5 721 857.5 721L730 721Q720 721 720 711L720 663Q720 653 730 653Z" fill="#00cc99" stroke="#000" stroke-width="1.6" stroke-linejoin="round"/>
<path d="M1252 505.5L1376 505.5Q1386 505.5 1386 515.5L1386 564Q1386 574 1376 574L1301 574L1269.5 622L1265 574L1252 574Q1242 574 1242 564L1242 515.5Q1242 505.5 1252 505.5Z" fill="#00cc99" stroke="#000" stroke-width="1.6" stroke-linejoin="round"/>
<path d="M1252 755L1266 755L1272 695.5L1302.5 755L1379.5 755Q1389.5 755 1389.5 765L1389.5 814Q1389.5 824 1379.5 824L1252 824Q1242 824 1242 814L1242 765Q1242 755 1252 755Z" fill="#00cc99" stroke="#000" stroke-width="1.6" stroke-linejoin="round"/>
</svg>
</body></html>
